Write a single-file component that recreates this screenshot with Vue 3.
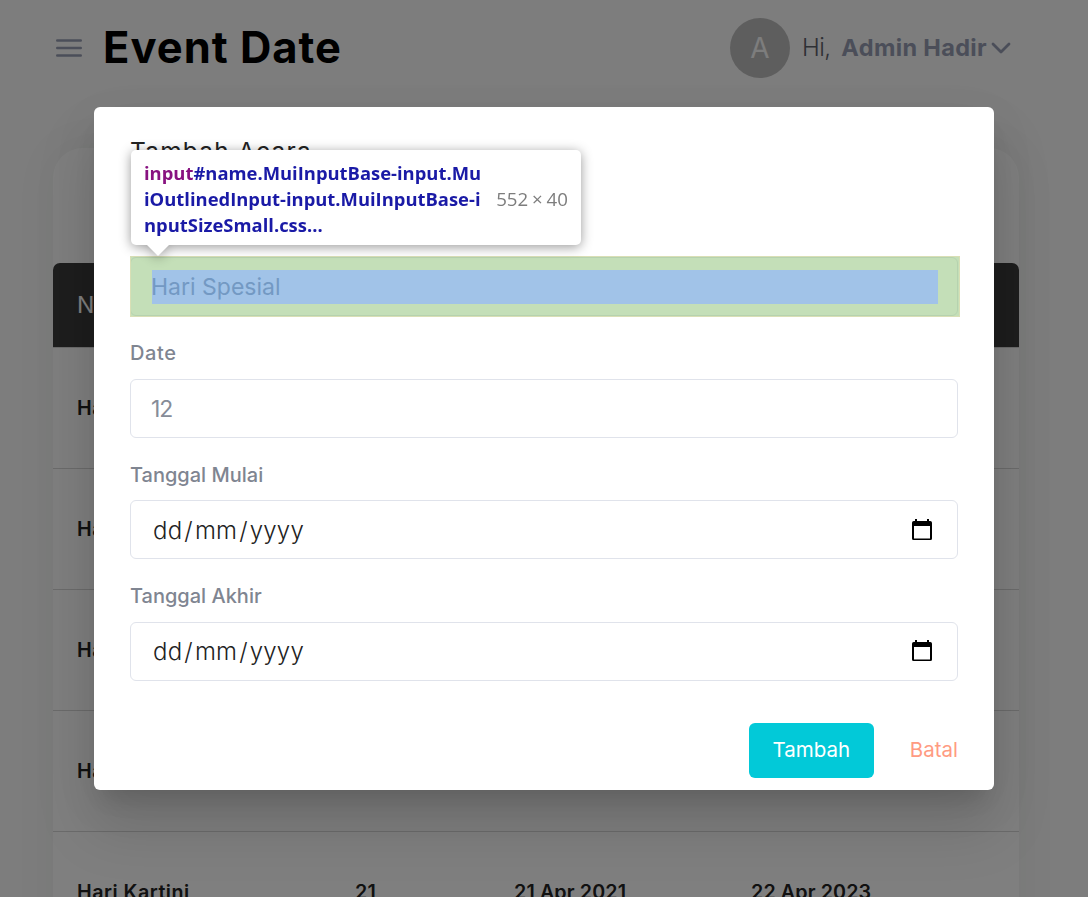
<script setup>
const rows = [
  { name: 'Hari Raya', date: '12', start: '12 Apr 2021', end: '13 Apr 2023' },
  { name: 'Hari Buruh', date: '1', start: '01 Mei 2021', end: '02 Mei 2023' },
  { name: 'Hari Batik', date: '2', start: '02 Okt 2021', end: '03 Okt 2023' },
  { name: 'Hari Ibu', date: '22', start: '22 Des 2021', end: '23 Des 2023' },
  { name: 'Hari Kartini', date: '21', start: '21 Apr 2021', end: '22 Apr 2023' },
]
const dateFields = ['Tanggal Mulai', 'Tanggal Akhir']
</script>

<template>
  <div class="screen">
    <div class="page">
      <header class="topbar">
        <svg class="burger" width="26" height="20" viewBox="0 0 26 20">
          <path d="M1.2 2.5H24.8M1.2 10H24.8M1.2 17.5H24.8" />
        </svg>
        <h1>Event Date</h1>
        <div class="user">
          <span class="avatar">A</span>
          <span class="hi">Hi,</span>
          <span class="who">Admin Hadir</span>
          <svg class="chev" width="20" height="12" viewBox="0 0 20 12"><path d="M2 2L10 10L18 2" /></svg>
        </div>
      </header>
      <section class="card">
        <div class="thead row"><span>Name</span><span>Date</span><span>Mulai</span><span>Akhir</span></div>
        <div v-for="r in rows" :key="r.name" class="row">
          <span class="rname">{{ r.name }}</span><span>{{ r.date }}</span><span>{{ r.start }}</span><span>{{ r.end }}</span>
        </div>
      </section>
    </div>

    <div class="backdrop">
      <div class="modal">
        <h2>Tambah Acara</h2>
        <div class="field first">
          <div class="box name">
            <span class="ph">Hari Spesial</span>
            <div class="hl"><div class="hl-content"></div></div>
            <div class="tip">
              <div class="sel"><b>input</b>#name.MuiInputBase-input.Mu<br />iOutlinedInput-input.MuiInputBase-i<br />nputSizeSmall.css…</div>
              <div class="dim">552 × 40</div>
            </div>
          </div>
        </div>
        <div class="field">
          <label class="ldate">Date</label>
          <div class="box"><span class="ph num">12</span></div>
        </div>
        <div v-for="f in dateFields" :key="f" class="field">
          <label>{{ f }}</label>
          <div class="box">
            <span class="dmy">dd<i>/</i>mm<i>/</i>yyyy</span>
            <svg class="cal" width="20" height="22" viewBox="0 0 20 22">
              <path fill-rule="evenodd" d="M3 0H5V2H15V0H17V2H18.2Q20 2 20 3.8V19.5Q20 21 18.5 21H1.5Q0 21 0 19.5V3.8Q0 2 1.8 2H3ZM2 7V19.5H18V7Z" />
            </svg>
          </div>
        </div>
        <div class="actions">
          <button class="add">Tambah</button>
          <span class="cancel">Batal</span>
        </div>
      </div>
    </div>
  </div>
</template>

<style>
body {
  margin: 0;
  overflow: hidden;
}
</style>

<style scoped>
.screen {
  position: relative;
  width: 1088px;
  height: 897px;
  overflow: hidden;
  font-family: Inter, "Liberation Sans", sans-serif;
}
.page {
  height: 897px;
  overflow: hidden;
  background: #fafafa;
}
.topbar {
  display: flex;
  align-items: center;
  height: 96px;
  padding: 0 77px 0 56px;
}
.burger path,
.chev path {
  fill: none;
  stroke: #979db2;
  stroke-width: 2.4;
  stroke-linecap: round;
  stroke-linejoin: round;
}
.chev path {
  stroke-width: 2.8;
}
h1 {
  margin: -2px 0 0 21px;
  font-size: 43.5px;
  font-weight: 650;
  color: #000;
  letter-spacing: 1px;
  white-space: nowrap;
}
.user {
  display: flex;
  align-items: center;
  margin-left: auto;
  font-size: 24px;
  color: #979db2;
  white-space: nowrap;
}
.avatar {
  width: 60px;
  height: 60px;
  line-height: 60px;
  border-radius: 50%;
  background: #bdbdbd;
  color: #fafafa;
  text-align: center;
  font-size: 28px;
}
.hi {
  margin: -1px 0 0 12px;
  font-weight: 300;
  letter-spacing: -0.6px;
  color: #5d606a;
}
.who {
  margin: -1px 0 0 11px;
  font-size: 23.5px;
  font-weight: 700;
  letter-spacing: 0.35px;
}
.chev {
  margin-left: 4px;
}
.card {
  width: 966px;
  height: 860px;
  box-sizing: border-box;
  margin: 52px 0 0 53px;
  padding-top: 115px;
  border-radius: 30px;
  background: #fff;
  box-shadow: 0 0 45px rgba(0, 60, 40, 0.05);
}
.row {
  display: grid;
  grid-template-columns: 278px 159px 237px 1fr;
  align-items: center;
  height: 120px;
  padding-left: 24px;
  border-bottom: 1px solid #d6d6d6;
  font-size: 19.7px;
  font-weight: 600;
  letter-spacing: 0.12px;
  color: #222;
  white-space: nowrap;
}
.rname {
  letter-spacing: 0.5px;
}
.thead {
  height: 84px;
  border-radius: 7px 7px 0 0;
  background: #3c3c3c;
  color: #fff;
  font-size: 23px;
  font-weight: 400;
}
.backdrop {
  position: absolute;
  inset: 0;
  background: rgba(0, 0, 0, 0.5);
}
.modal {
  box-sizing: border-box;
  width: 900px;
  height: 683px;
  margin: 107px 0 0 94px;
  padding: 28px 36px 12px;
  border-radius: 6px;
  background: #fff;
  box-shadow: 0 16px 22px -10px rgba(0, 0, 0, 0.13), 0 36px 57px 4px rgba(0, 0, 0, 0.12), 0 13px 50px 4px rgba(0, 0, 0, 0.04);
}
h2 {
  margin: 0;
  height: 32px;
  line-height: 33px;
  font-size: 24.5px;
  font-weight: 400;
  letter-spacing: 1.2px;
  color: #222;
}
.field {
  height: 121.5px;
  display: flex;
  flex-direction: column;
  justify-content: flex-end;
}
.field.first {
  height: 149px;
}
label {
  height: 50.5px;
  line-height: 51.5px;
  font-size: 20px;
  font-weight: 450;
  color: #7f8591;
}
.ldate {
  letter-spacing: 0.6px;
}
.box {
  position: relative;
  display: flex;
  align-items: center;
  justify-content: space-between;
  box-sizing: border-box;
  width: 828px;
  height: 59px;
  padding: 0 25px 0 20px;
  border: 1px solid #e0e3eb;
  border-radius: 6px;
}
.ph {
  font-size: 23px;
  color: #868c98;
}
.num {
  padding-top: 2px;
  letter-spacing: -1.2px;
}
.dmy {
  padding: 1px 0 0 2px;
  font-size: 24px;
  font-weight: 300;
  letter-spacing: 0.2px;
  color: #222;
}
.dmy i {
  font-style: normal;
  margin: 0 2px;
}
.hl {
  position: absolute;
  left: -1px;
  top: -2px;
  width: 830px;
  height: 61px;
  box-sizing: border-box;
  border: 1px solid #d9dfb5;
  background: rgba(147, 196, 125, 0.55);
}
.name .ph {
  position: relative;
  z-index: 1;
  color: #7399c3;
}
.hl-content {
  position: absolute;
  left: 21px;
  top: 13px;
  width: 786px;
  height: 34px;
  background: #a1c3e8;
}
.tip {
  position: absolute;
  left: 0;
  top: -108px;
  display: flex;
  align-items: center;
  box-sizing: border-box;
  width: 450px;
  height: 95px;
  padding: 3px 13px 0;
  border-radius: 5px;
  background: #fff;
  filter: drop-shadow(0 2px 6px rgba(0, 0, 0, 0.4));
  font-family: "Open Sans", "Noto Sans", sans-serif;
  line-height: 26px;
  white-space: nowrap;
}
.tip::after {
  content: "";
  position: absolute;
  left: 16px;
  top: 95px;
  border: 11px solid transparent;
  border-top-color: #fff;
  border-bottom: 0;
}
.sel {
  width: 337px;
  font-size: 18.4px;
  font-weight: 700;
  color: #1a1aa6;
}
.sel b {
  font-weight: 700;
  color: #881280;
}
.dim {
  margin-left: auto;
  font-size: 18.7px;
  word-spacing: -1px;
  font-weight: 400;
  color: #7d7d7d;
}
.actions {
  display: flex;
  align-items: center;
  justify-content: flex-end;
  margin-top: 42px;
  font-size: 20.5px;
}
.add {
  width: 125px;
  height: 55px;
  padding: 0 0 2px;
  border: 0;
  border-radius: 6px;
  background: #02c9d8;
  color: #fff;
  font: inherit;
}
.cancel {
  margin: -2px 0 0 36px;
  color: #ff9b82;
}
</style>
